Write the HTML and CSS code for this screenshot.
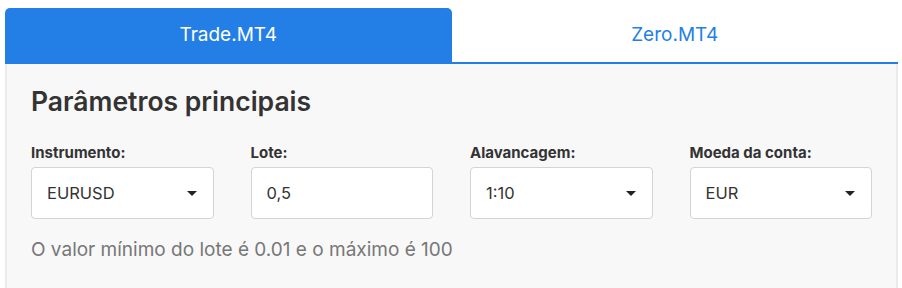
FILE: index.html
```html
<!DOCTYPE html>
<html lang="pt">
<head>
    <meta charset="UTF-8">
    <meta name="viewport" content="width=device-width, initial-scale=1.0">
    <title>Calculadora</title>
    <link rel="stylesheet" href="styles.css">
</head>
<body>

    <div class="calc">
        <div class="calc__tabs">
            <button class="calc__tab is-active" type="button">Trade.MT4</button>
            <button class="calc__tab" type="button">Zero.MT4</button>
        </div>

        <div class="calc__panel">
            <h2 class="calc__title">Parâmetros principais</h2>

            <div class="calc__fields">
                <div class="calc__field">
                    <label class="calc__label">Instrumento:</label>
                    <div class="calc__select">
                        <span>EURUSD</span>
                        <span class="calc__arrow"></span>
                    </div>
                </div>
                <div class="calc__field">
                    <label class="calc__label">Lote:</label>
                    <div class="calc__input">0,5</div>
                </div>
                <div class="calc__field">
                    <label class="calc__label">Alavancagem:</label>
                    <div class="calc__select">
                        <span>1:10</span>
                        <span class="calc__arrow"></span>
                    </div>
                </div>
                <div class="calc__field">
                    <label class="calc__label">Moeda da conta:</label>
                    <div class="calc__select">
                        <span>EUR</span>
                        <span class="calc__arrow"></span>
                    </div>
                </div>
            </div>

            <p class="calc__hint">O valor mínimo do lote é 0.01 e o máximo é 100</p>
        </div>
    </div>

</body>
</html>
```

FILE: styles.css
```css
/* Page */
body {
    margin: 0;
    background: #fff;
    font-family: Inter, "Noto Sans", sans-serif;
    color: #333;
}

/* Calculator Block */
.calc {
    padding: 8px 4px 0 5px;
}

/* Tabs */
.calc__tabs {
    display: flex;
}

.calc__tab {
    flex: 1;
    height: 56px;
    padding: 0 0 2px;
    border: none;
    border-bottom: 2px solid #237fe6;
    background: transparent;
    color: #237fe6;
    font-family: inherit;
    font-size: 19px;
    cursor: pointer;
}

.calc__tab.is-active {
    background: #237fe6;
    color: #fff;
    border-radius: 5px 5px 0 0;
}

/* Panel */
.calc__panel {
    background: #f8f8f8;
    border-left: 2px solid #ebebeb;
    border-right: 2px solid #ebebeb;
    padding: 21px 24px 30px;
}

.calc__title {
    margin: 0;
    font-size: 26.5px;
    line-height: 32px;
    font-weight: 600;
    color: #333;
}

/* Fields */
.calc__fields {
    display: grid;
    grid-template-columns: repeat(4, 1fr);
    column-gap: 37px;
    margin-top: 27px;
}

.calc__label {
    display: block;
    font-size: 15px;
    line-height: 18px;
    font-weight: 700;
    margin-bottom: 5px;
}

.calc__select,
.calc__input {
    display: flex;
    align-items: center;
    justify-content: space-between;
    height: 52px;
    box-sizing: border-box;
    padding: 0 16px 0 15px;
    background: #fff;
    border: 1px solid #d4d4d4;
    border-radius: 4px;
    font-size: 16.5px;
}

/* Dropdown arrow */
.calc__arrow {
    width: 0;
    height: 0;
    border-left: 5px solid transparent;
    border-right: 5px solid transparent;
    border-top: 5px solid #222;
}

.calc__hint {
    margin: 20px 0 0;
    font-size: 19px;
    line-height: 22px;
    color: #777;
}
```
